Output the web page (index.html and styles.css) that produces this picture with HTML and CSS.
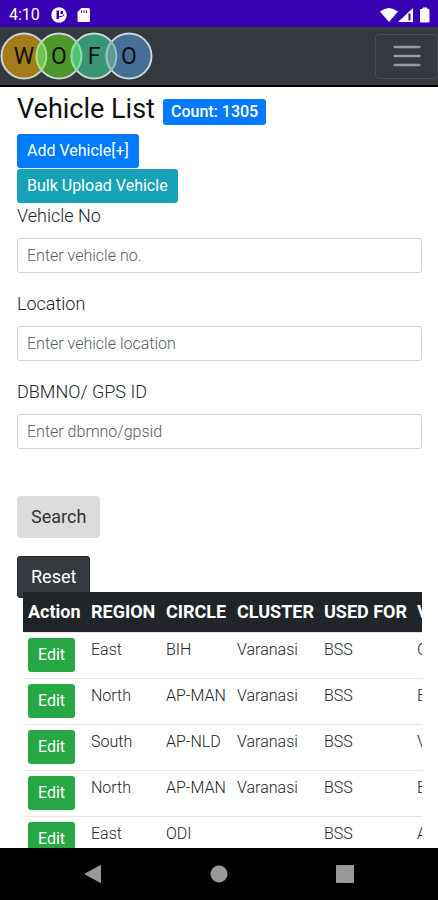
FILE: index.html
```html
<!DOCTYPE html>
<html lang="en">
<head>
<meta charset="utf-8">
<meta name="viewport" content="width=device-width, initial-scale=1">
<title>Vehicle List</title>
<link rel="stylesheet" href="styles.css">
</head>
<body>
<div class="status">
  <span class="time">4:10</span>
  <svg class="status-left" width="42" height="16" viewBox="0 0 42 16" aria-hidden="true">
    <circle cx="8" cy="8" r="7.7" fill="#fff"/>
    <path d="M5.500 3.500H8V12H5.500ZM9.500 4H12V7H9.500Z" fill="#3700b3"/>
    <path d="M8 9.500H10.500Q13 9 13 7" fill="none" stroke="#3700b3" stroke-width="1"/>
    <path d="M30.500 1H37.500Q39 1 39 2.500V13.500Q39 15 37.500 15H28Q26.500 15 26.500 13.500V5Z" fill="#fff"/>
    <path d="M30.500 3.500V6M33 3.500V6M35.500 3.500V6" stroke="#3700b3" stroke-width="1"/>
  </svg>
  <svg class="status-right" width="50" height="16" viewBox="0 0 50 16" aria-hidden="true">
    <path d="M0 4.500Q9 -2.500 18 4.500L9 15Z" fill="#fff"/>
    <path d="M18 15L33 1V15Z" fill="#fff"/>
    <path d="M29.500 6.500V13.500" stroke="#3700b3" stroke-width="2"/>
    <path d="M40.500 2.500H43V1H47V2.500H49V15H40.500Z" fill="#fff" stroke="#fff" stroke-linejoin="round"/>
  </svg>
</div>
<nav class="navbar">
  <a class="brand" href="#" aria-label="WOFO home">
    <svg width="153" height="48" viewBox="0 0 153 48">
      <g stroke="#ccd5d5" stroke-width="2">
        <circle cx="24" cy="24" r="22.500" fill="#a57c1b"/>
        <circle cx="59" cy="24" r="22.500" fill="#4c982c"/>
        <circle cx="94" cy="24" r="22.500" fill="#399574"/>
        <circle cx="129" cy="24" r="22.500" fill="#456f95"/>
      </g>
      <g stroke-width="2">
        <path d="M41.500 10A22.500 22.500 0 0 1 41.500 38A22.500 22.500 0 0 1 41.500 10Z" fill="#72c34f" stroke="#a4df83"/>
        <path d="M76.500 10A22.500 22.500 0 0 1 76.500 38A22.500 22.500 0 0 1 76.500 10Z" fill="#4fc56d" stroke="#8bdeaa"/>
        <path d="M111.500 10A22.500 22.500 0 0 1 111.500 38A22.500 22.500 0 0 1 111.500 10Z" fill="#5b9c99" stroke="#91bfc0"/>
      </g>
      <g class="brand-text" text-anchor="middle">
        <text x="24" y="32">W</text><text x="59" y="32">O</text><text x="94" y="32">F</text><text x="129" y="32">O</text>
      </g>
    </svg>
  </a>
  <button class="toggler" type="button" aria-label="Toggle navigation">
    <svg width="28" height="22" viewBox="0 0 28 22"><path d="M1.500 2H26.500M1.500 11H26.500M1.500 20H26.500" stroke="#969a9e" stroke-width="2.300" stroke-linecap="round"/></svg>
  </button>
</nav>
<main class="page">
  <header class="heading">
    <h1>Vehicle List</h1>
    <span class="badge">Count: 1305</span>
  </header>
  <div class="actions">
    <a class="btn btn-sm primary" href="#">Add Vehicle[+]</a>
    <a class="btn btn-sm info" href="#">Bulk Upload Vehicle</a>
  </div>
  <form class="filters">
    <div class="field">
      <label for="vehicle">Vehicle No</label>
      <input id="vehicle" type="text" placeholder="Enter vehicle no.">
    </div>
    <div class="field">
      <label for="location">Location</label>
      <input id="location" type="text" placeholder="Enter vehicle location">
    </div>
    <div class="field">
      <label for="gps">DBMNO/ GPS ID</label>
      <input id="gps" type="text" placeholder="Enter dbmno/gpsid">
    </div>
    <div class="buttons">
      <button class="btn light" type="submit">Search</button>
      <button class="btn dark" type="reset">Reset</button>
    </div>
  </form>
  <div class="table-wrap">
    <table>
      <colgroup><col class="c-action"><col class="c-region"><col class="c-circle"><col class="c-cluster"><col class="c-used"><col class="c-last"></colgroup>
      <thead>
        <tr><th>Action</th><th>REGION</th><th>CIRCLE</th><th>CLUSTER</th><th>USED FOR</th><th>V</th></tr>
      </thead>
      <tbody>
        <tr><td><button class="btn btn-sm success" type="button">Edit</button></td><td>East</td><td>BIH</td><td>Varanasi</td><td>BSS</td><td>G</td></tr>
        <tr><td><button class="btn btn-sm success" type="button">Edit</button></td><td>North</td><td>AP-MAN</td><td>Varanasi</td><td>BSS</td><td>E</td></tr>
        <tr><td><button class="btn btn-sm success" type="button">Edit</button></td><td>South</td><td>AP-NLD</td><td>Varanasi</td><td>BSS</td><td>V</td></tr>
        <tr><td><button class="btn btn-sm success" type="button">Edit</button></td><td>North</td><td>AP-MAN</td><td>Varanasi</td><td>BSS</td><td>E</td></tr>
        <tr><td><button class="btn btn-sm success" type="button">Edit</button></td><td>East</td><td>ODI</td><td></td><td>BSS</td><td>A</td></tr>
      </tbody>
    </table>
  </div>
</main>
<footer class="sysnav">
  <button type="button" aria-label="Back"><svg width="18" height="20" viewBox="0 0 18 20"><path d="M1 10L16.500 1.500V18.500Z" fill="#999" stroke="#999" stroke-linejoin="round"/></svg></button>
  <button type="button" aria-label="Home"><svg width="18" height="18" viewBox="0 0 18 18"><circle cx="9" cy="9" r="8.500" fill="#999"/></svg></button>
  <button type="button" aria-label="Recents"><svg width="18" height="18" viewBox="0 0 18 18"><rect width="18" height="18" rx="1" fill="#999"/></svg></button>
</footer>
</body>
</html>
```
FILE: styles.css
```css
* { box-sizing: border-box; }
body {
  margin: 0;
  height: 100vh;
  display: flex;
  flex-direction: column;
  overflow: hidden;
  background: #fff;
  color: #212529;
  font-family: Roboto, "Liberation Sans", sans-serif;
  font-size: 18px;
  line-height: 26px;
}
button, input { font-family: inherit; }
svg { display: block; }

.status {
  flex: none;
  display: flex;
  align-items: center;
  height: 27px;
  padding: 2px 8px 0 9px;
  background: #3700b3;
  color: #fff;
}
.time { font-size: 16px; font-weight: 400; }
.status-left { margin-left: 11px; }
.status-right { margin-left: auto; }

.navbar {
  flex: none;
  display: flex;
  align-items: center;
  justify-content: space-between;
  height: 60px;
  background: #343a40;
  border-bottom: 2px solid #000;
}
.brand-text { font: 23px Roboto, "Liberation Sans", sans-serif; fill: #111; }
.toggler {
  display: flex;
  align-items: center;
  justify-content: center;
  width: 63px;
  height: 45px;
  padding: 0;
  background: none;
  border: 1px solid #484e53;
  border-radius: 4px;
}

.page {
  flex: 1;
  min-height: 0;
  overflow: hidden;
  padding: 4px 16px 0 17px;
}
.heading { display: flex; align-items: center; gap: 8px; height: 43px; }
h1 {
  margin: 0;
  font-size: 27px;
  line-height: 34px;
  font-weight: 400;
  color: #111;
  padding-bottom: 8px;
}
.badge {
  margin-bottom: 2px;
  padding: 0 8px;
  font-size: 16px;
  font-weight: 500;
  line-height: 26px;
  color: #fff;
  background: #007bff;
  border-radius: 3px;
}
.btn {
  display: block;
  height: 42px;
  padding: 0 14px;
  border: 0;
  border-radius: 4px;
  font-size: 18px;
  line-height: 42px;
  text-decoration: none;
  color: #fff;
}
.btn-sm {
  height: 34px;
  padding: 0 10px;
  font-size: 16px;
  line-height: 34px;
  font-weight: 400;
  border-radius: 3px;
}
.primary { background: #007bff; }
.info { background: #17a2b8; }
.success { background: #28a745; }
.light { background: #dcdcdc; color: #333; }
.dark { background: #343a40; box-shadow: inset 0 0 0 1px #23292e; }
.actions { display: flex; flex-direction: column; align-items: flex-start; gap: 1px; }

.field { margin-bottom: 18px; }
label { display: block; margin-bottom: 9px; font-weight: 300; }
input {
  display: block;
  width: 100%;
  height: 35px;
  padding: 0 9px;
  border: 1px solid #ced4da;
  border-radius: 3px;
  font-size: 16px;
  font-weight: 300;
  color: #495057;
  background: #fff;
}
input::placeholder { color: #545c63; opacity: 1; }
.buttons {
  display: flex;
  flex-direction: column;
  align-items: flex-start;
  gap: 18px;
  padding-top: 29px;
}

.table-wrap { position: relative; margin: -6px 0 0 6px; overflow: hidden; }
table { width: 500px; table-layout: fixed; border-collapse: separate; border-spacing: 0; }
.c-action { width: 63px; }
.c-region { width: 75px; }
.c-circle { width: 71px; }
.c-cluster { width: 87px; }
.c-used { width: 93px; }
th {
  height: 40px;
  padding: 0 5px;
  text-align: left;
  font-size: 18px;
  font-weight: 700;
  white-space: nowrap;
  color: #fff;
  background: #212529;
}
td {
  height: 46px;
  padding: 5px;
  vertical-align: top;
  border-top: 1px solid #e3e7ea;
  font-size: 16px;
  font-weight: 300;
  line-height: 24px;
  white-space: nowrap;
}

.sysnav {
  flex: none;
  display: flex;
  align-items: center;
  justify-content: center;
  gap: 108px;
  height: 52px;
  background: #000;
}
.sysnav button { padding: 0; border: 0; background: none; }
```
